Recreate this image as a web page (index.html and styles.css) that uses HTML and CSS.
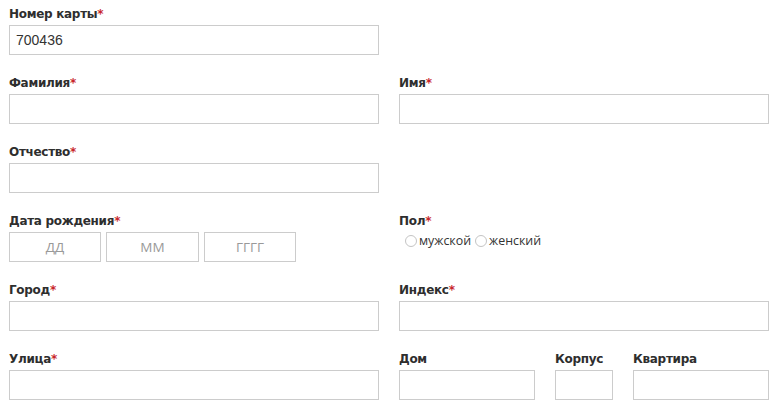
FILE: index.html
```html
<!DOCTYPE html>
<html lang="ru">
<head>
<meta charset="utf-8">
<title>Анкета</title>
<link rel="stylesheet" href="styles.css">
</head>
<body>
<form class="form">
  <div class="field">
    <label class="label">Номер карты<span class="req">*</span></label>
    <input class="input" type="text" value="700436">
  </div>
  <div class="field empty"></div>

  <div class="field">
    <label class="label">Фамилия<span class="req">*</span></label>
    <input class="input" type="text">
  </div>
  <div class="field">
    <label class="label">Имя<span class="req">*</span></label>
    <input class="input" type="text">
  </div>

  <div class="field">
    <label class="label">Отчество<span class="req">*</span></label>
    <input class="input" type="text">
  </div>
  <div class="field empty"></div>

  <div class="field">
    <label class="label">Дата рождения<span class="req">*</span></label>
    <div class="date">
      <input class="input center" type="text" placeholder="ДД">
      <input class="input center mid" type="text" placeholder="ММ">
      <input class="input center" type="text" placeholder="ГГГГ">
    </div>
  </div>
  <div class="field">
    <label class="label">Пол<span class="req">*</span></label>
    <div class="radios">
      <label class="radio"><span class="circle"></span>мужской</label>
      <label class="radio"><span class="circle"></span>женский</label>
    </div>
  </div>

  <div class="field">
    <label class="label">Город<span class="req">*</span></label>
    <input class="input" type="text">
  </div>
  <div class="field">
    <label class="label">Индекс<span class="req">*</span></label>
    <input class="input" type="text">
  </div>

  <div class="field">
    <label class="label">Улица<span class="req">*</span></label>
    <input class="input" type="text">
  </div>
  <div class="field address">
    <div class="sub">
      <label class="label">Дом</label>
      <input class="input" type="text">
    </div>
    <div class="sub">
      <label class="label">Корпус</label>
      <input class="input" type="text">
    </div>
    <div class="sub">
      <label class="label">Квартира</label>
      <input class="input" type="text">
    </div>
  </div>
</form>
</body>
</html>
```

FILE: styles.css
```css
html, body {
  margin: 0;
  padding: 0;
  background: #fff;
}
body {
  padding: 7px 9px 0;
  font-family: "DejaVu Sans", Verdana, sans-serif;
  color: #333;
}
.form {
  display: grid;
  grid-template-columns: 370px 370px;
  column-gap: 20px;
  row-gap: 21px;
}
.field {
  display: flex;
  flex-direction: column;
  min-height: 48px;
}
.label {
  display: block;
  font-family: "DejaVu Sans", Verdana, sans-serif;
  font-weight: bold;
  font-size: 12px;
  line-height: 15px;
  letter-spacing: -0.3px;
  color: #2e2e2e;
  margin-bottom: 3px;
}
.req {
  color: #c8262b;
  font-weight: bold;
  letter-spacing: 0;
}
.input {
  box-sizing: border-box;
  height: 30px;
  width: 100%;
  margin: 0;
  border: 1px solid #ccc;
  border-radius: 0;
  padding: 0 6px;
  font-family: "Liberation Sans", Arial, sans-serif;
  font-size: 14px;
  color: #333;
  background: #fff;
  outline: none;
}
.input.center {
  text-align: center;
  font-family: "Open Sans", sans-serif;
  font-size: 13.5px;
}
.input::placeholder {
  color: #999;
}
.date {
  display: flex;
  gap: 5px;
}
.date .input {
  width: 92px;
}
.date .input.mid {
  width: 93px;
}
.radios {
  display: flex;
  align-items: center;
  gap: 4px;
  padding-left: 6px;
  margin-top: 1px;
}
.radio {
  display: flex;
  align-items: center;
  font-family: "Open Sans", sans-serif;
  font-size: 12.4px;
  line-height: 16px;
  color: #333;
}
.circle {
  box-sizing: border-box;
  width: 12px;
  height: 12px;
  border: 1px solid #c4c4c4;
  border-radius: 50%;
  margin-right: 2px;
  background: #fff;
}
.address {
  flex-direction: row;
  gap: 20px;
}
.sub {
  display: flex;
  flex-direction: column;
}
.sub:nth-child(1), .sub:nth-child(3) {
  width: 136px;
}
.sub:nth-child(2) {
  width: 58px;
}
```
